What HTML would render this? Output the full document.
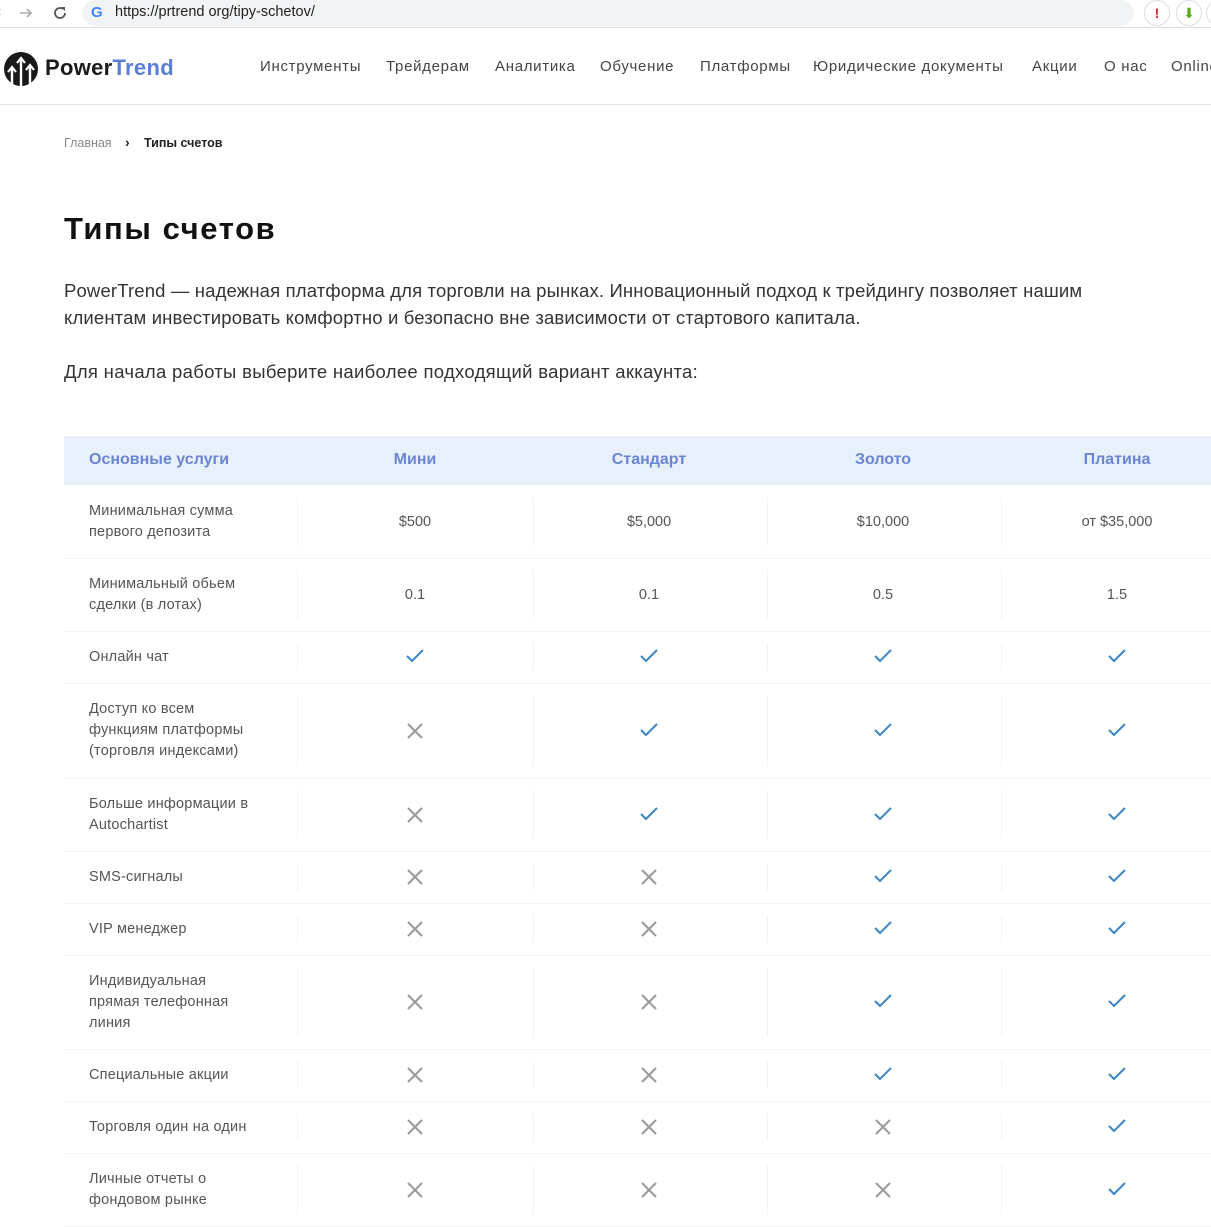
<!DOCTYPE html>
<html><head><meta charset="utf-8"><style>
*{margin:0;padding:0;box-sizing:border-box}
body{width:1211px;height:1218px;overflow:hidden;background:#fff;font-family:"Liberation Sans","DejaVu Sans",sans-serif;position:relative;color:#333}
.a{position:absolute;white-space:nowrap}
.nav{top:58px;font-size:15px;color:#444;letter-spacing:.7px}
.lbl{position:absolute;left:89px;font-size:14.5px;line-height:21px;color:#555;letter-spacing:.2px}
.cell{position:absolute;width:220px;text-align:center;font-size:14.5px;color:#555}
.hl{position:absolute;left:64px;width:1147px;height:1px;background:#f4f4f4}
.vl{position:absolute;width:1px;background:#f3f3f3}
</style></head><body>
<div class="a" style="left:0;top:0;width:1211px;height:28px;background:#fff;border-bottom:1px solid #ddd"></div>
<div class="a" style="left:-4px;top:3px;font-size:16px;color:#777">‹</div>
<svg class="a" style="left:18px;top:5px" width="16" height="16"><path d="M2 8h11M9 4l4 4-4 4" stroke="#aaa" stroke-width="1.6" fill="none"/></svg>
<svg class="a" style="left:51px;top:4px" width="18" height="18"><path d="M14 9a5 5 0 1 1-2-4" stroke="#555" stroke-width="1.8" fill="none"/><path d="M10 3h4v4z" fill="#555"/></svg>
<div class="a" style="left:82px;top:0;width:1052px;height:26px;background:#f1f3f4;border-radius:13px"></div>
<div class="a" style="left:91px;top:4px;font-size:15px;font-weight:bold;color:#4285f4">G</div>
<div class="a" style="left:115px;top:4px;font-size:14.5px;color:#222">https://prtrend org/tipy-schetov/</div>
<div class="a" style="left:1144px;top:0;width:26px;height:26px;border-radius:13px;border:1px solid #ddd;color:#d22;font-size:14px;text-align:center;line-height:24px;font-weight:bold">!</div>
<div class="a" style="left:1176px;top:0;width:26px;height:26px;border-radius:13px;border:1px solid #ddd;text-align:center;line-height:24px;color:#5a2;font-size:14px">⬇</div>
<div class="a" style="left:1206px;top:0;width:26px;height:26px;border-radius:13px;border:1px solid #ddd"></div>
<svg class="a" style="left:3px;top:51px" width="36" height="36" viewBox="0 0 36 36"><circle cx="18" cy="18" r="17" fill="#1a1a1a"/><path d="M9 34V18M18 35V8M27 34V16" stroke="#fff" stroke-width="2.4"/><path d="M5 21l4-5 4 5M14 12l4-5 4 5M23 19l4-5 4 5" stroke="#fff" stroke-width="2.2" fill="none"/></svg>
<div class="a" style="left:45px;top:55px;font-size:22px;font-weight:bold;color:#1a1a1a;letter-spacing:.3px">Power<span style="color:#5b7fd6">Trend</span></div>
<div class="a nav" style="left:260px">Инструменты</div>
<div class="a nav" style="left:386px">Трейдерам</div>
<div class="a nav" style="left:495px">Аналитика</div>
<div class="a nav" style="left:600px">Обучение</div>
<div class="a nav" style="left:700px">Платформы</div>
<div class="a nav" style="left:813px">Юридические документы</div>
<div class="a nav" style="left:1032px">Акции</div>
<div class="a nav" style="left:1104px">О нас</div>
<div class="a nav" style="left:1171px">Online</div>
<div class="a" style="left:0;top:104px;width:1211px;height:1px;background:#e6e6e6"></div>
<div class="a" style="left:64px;top:136px;font-size:12.5px;color:#888">Главная</div>
<div class="a" style="left:125px;top:134px;font-size:14px;color:#222;font-weight:bold">›</div>
<div class="a" style="left:144px;top:136px;font-size:12.5px;color:#222;font-weight:bold">Типы счетов</div>
<div class="a" style="left:64px;top:211px;font-size:31px;font-weight:bold;color:#111;letter-spacing:1.6px">Типы счетов</div>
<div class="a" style="left:64px;top:277px;font-size:18.5px;line-height:27px;color:#333;white-space:normal;width:1140px;letter-spacing:.15px">PowerTrend — надежная платформа для торговли на рынках. Инновационный подход к трейдингу позволяет нашим<br>клиентам инвестировать комфортно и безопасно вне зависимости от стартового капитала.</div>
<div class="a" style="left:64px;top:361px;font-size:18.5px;color:#333;letter-spacing:.3px">Для начала работы выберите наиболее подходящий вариант аккаунта:</div>
<div class="a" style="left:64px;top:436px;width:1147px;height:49px;background:#e8f0fc"></div>
<div class="a" style="left:89px;top:451px;font-size:16px;font-weight:bold;color:#6a85d4">Основные услуги</div>
<div class="cell" style="left:305px;top:451px;font-size:16px;font-weight:bold;color:#6a85d4">Мини</div>
<div class="cell" style="left:539px;top:451px;font-size:16px;font-weight:bold;color:#6a85d4">Стандарт</div>
<div class="cell" style="left:773px;top:451px;font-size:16px;font-weight:bold;color:#6a85d4">Золото</div>
<div class="cell" style="left:1007px;top:451px;font-size:16px;font-weight:bold;color:#6a85d4">Платина</div>
<div id="rows"></div>
<script>
var C='<svg width="20" height="16" viewBox="0 0 20 16"><path d="M2 8l5 5L18 2" stroke="#3a85c8" stroke-width="2" fill="none"/></svg>';
var X='<svg width="18" height="18" viewBox="0 0 18 18"><path d="M2 2l14 14M16 2L2 16" stroke="#999" stroke-width="2" fill="none"/></svg>';
var rows=[
[486,558,"Минимальная сумма<br>первого депозита",["$500","$5,000","$10,000","от $35,000"]],
[558,631,"Минимальный обьем<br>сделки (в лотах)",["0.1","0.1","0.5","1.5"]],
[631,683,"Онлайн чат",[C,C,C,C]],
[683,778,"Доступ ко всем<br>функциям платформы<br>(торговля индексами)",[X,C,C,C]],
[778,851,"Больше информации в<br>Autochartist",[X,C,C,C]],
[851,903,"SMS-сигналы",[X,X,C,C]],
[903,955,"VIP менеджер",[X,X,C,C]],
[955,1049,"Индивидуальная<br>прямая телефонная<br>линия",[X,X,C,C]],
[1049,1101,"Специальные акции",[X,X,C,C]],
[1101,1153,"Торговля один на один",[X,X,X,C]],
[1153,1226,"Личные отчеты о<br>фондовом рынке",[X,X,X,C]]];
var h='',xs=[305,539,773,1007],dv=[297,533,767,1001];
rows.forEach(function(r){
 var t=r[0],b=r[1],mid=(t+b)/2,n=r[2].split('<br>').length;
 h+='<div class="lbl" style="top:'+(mid-n*10.5)+'px">'+r[2]+'</div>';
 r[3].forEach(function(v,i){
  h+='<div class="cell" style="left:'+xs[i]+'px;top:'+(mid-9)+'px;height:18px;line-height:18px">'+v+'</div>';
 });
 dv.forEach(function(x){h+='<div class="vl" style="left:'+x+'px;top:'+(t+12)+'px;height:'+(b-t-24)+'px"></div>';});
 h+='<div class="hl" style="top:'+b+'px"></div>';
});
document.getElementById('rows').innerHTML=h;
</script>
</body></html>
